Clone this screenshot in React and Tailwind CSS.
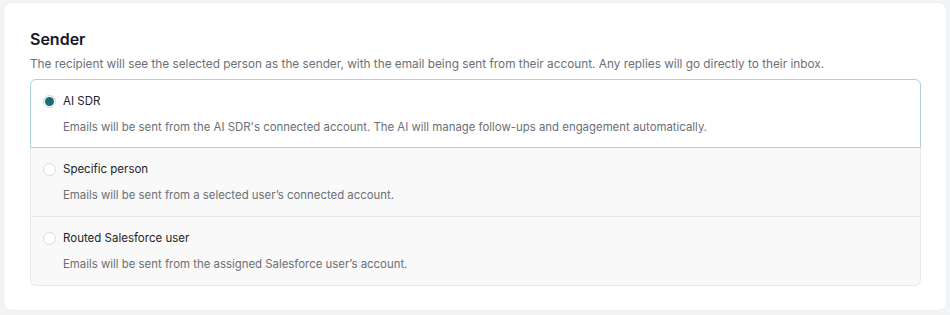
import React, { useState } from 'react';

const options = [
  {
    id: 'ai',
    label: 'AI SDR',
    description: "Emails will be sent from the AI SDR's connected account. The AI will manage follow-ups and engagement automatically.",
  },
  {
    id: 'person',
    label: 'Specific person',
    description: 'Emails will be sent from a selected user’s connected account.',
  },
  {
    id: 'salesforce',
    label: 'Routed Salesforce user',
    description: 'Emails will be sent from the assigned Salesforce user’s account.',
  },
];

const Radio = ({ checked }) => (
  <span
    className={`flex h-[13px] w-[13px] shrink-0 items-center justify-center rounded-full border ${
      checked ? 'border-[#c9d3d6] bg-white' : 'border-[#d9dce0] bg-white'
    }`}
  >
    {checked && <span className="h-[9px] w-[9px] rounded-full bg-[#1d6b76]" />}
  </span>
);

export default function App() {
  const [selected, setSelected] = useState('ai');

  return (
    <div
      className="h-[315px] w-[950px] bg-[#f3f4f6] px-[3px] pt-[2px]"
      style={{ fontFamily: 'Inter, "Noto Sans", sans-serif' }}
    >
      <div className="h-[309px] rounded-lg border border-[#eceef1] bg-white pl-[26px] pt-[26px]">
        <h2 className="text-[16px] font-semibold leading-5 text-[#111827]">Sender</h2>
        <p className="mt-[5px] text-[11.8px] leading-5 text-[#6b6f76]">
          The recipient will see the selected person as the sender, with the email being sent from their account. Any replies will go directly to their inbox.
        </p>

        <div className="mt-[5px] flex w-[891px] flex-col">
          {options.map((opt, i) => {
            const checked = selected === opt.id;
            const last = i === options.length - 1;
            return (
              <button
                key={opt.id}
                onClick={() => setSelected(opt.id)}
                className={`flex h-[69px] flex-col items-start px-[12px] pt-[11px] text-left ${
                  checked
                    ? 'rounded-t-md border border-[#a8d3db] bg-white'
                    : 'border-x border-b border-[#e8e9eb] bg-[#f9f9f9]'
                } ${last ? 'rounded-b-md' : ''}`}
              >
                <div className="flex items-center gap-[7px]">
                  <Radio checked={checked} />
                  <span className="text-[11.5px] leading-5 text-[#1f2328]">{opt.label}</span>
                </div>
                <p className="mt-[6px] pl-[20px] text-[11.4px] leading-5 text-[#6b6f76]">{opt.description}</p>
              </button>
            );
          })}
        </div>
      </div>
    </div>
  );
}
